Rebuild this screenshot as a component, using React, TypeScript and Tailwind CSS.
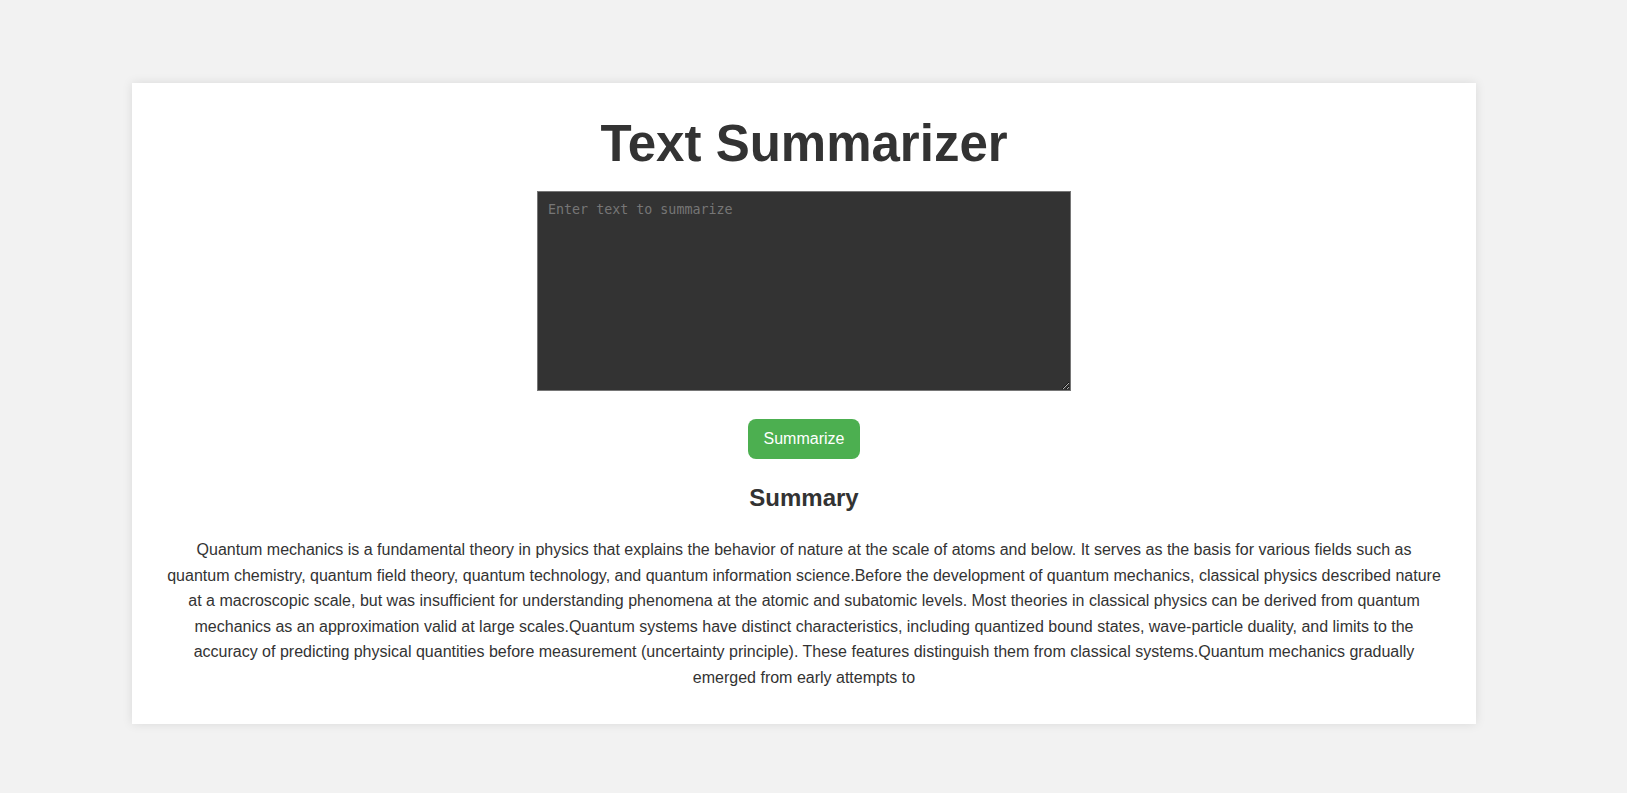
import React from "react";

const summary =
  "Quantum mechanics is a fundamental theory in physics that explains the behavior of nature at the scale of atoms and below. It serves as the basis for various fields such as quantum chemistry, quantum field theory, quantum technology, and quantum information science.Before the development of quantum mechanics, classical physics described nature at a macroscopic scale, but was insufficient for understanding phenomena at the atomic and subatomic levels. Most theories in classical physics can be derived from quantum mechanics as an approximation valid at large scales.Quantum systems have distinct characteristics, including quantized bound states, wave-particle duality, and limits to the accuracy of predicting physical quantities before measurement (uncertainty principle). These features distinguish them from classical systems.Quantum mechanics gradually emerged from early attempts to";

const App: React.FC = () => {
  return (
    <div className="min-h-screen bg-[#f2f2f2] pt-[83px] font-['Liberation_Sans',Arial,sans-serif] text-[#333]">
      <div className="ml-[132px] w-[1344px] bg-white px-[32px] pt-[32px] pb-[33px] text-center shadow-[0_0_10px_rgba(0,0,0,0.1)]">
        <h1 className="text-[51px] font-bold leading-[58px]">Text Summarizer</h1>

        <div className="mt-[18px] flex justify-center">
          <textarea
            placeholder="Enter text to summarize"
            className="h-[200px] w-[534px] border border-[#767676] bg-[#333] p-[10px] font-['DejaVu_Sans_Mono',monospace] text-[13.33px] leading-[normal] text-white placeholder:text-[#767676] outline-none"
          />
        </div>

        <button className="mt-[28px] h-[40px] w-[112px] rounded-lg bg-[#4caf50] text-[16px] text-white">
          Summarize
        </button>

        <h2 className="mt-[25px] text-[24px] font-bold leading-[28px]">Summary</h2>

        <p className="mt-[25px] text-[16px] leading-[25.6px]">{summary}</p>
      </div>
    </div>
  );
};

export default App;
